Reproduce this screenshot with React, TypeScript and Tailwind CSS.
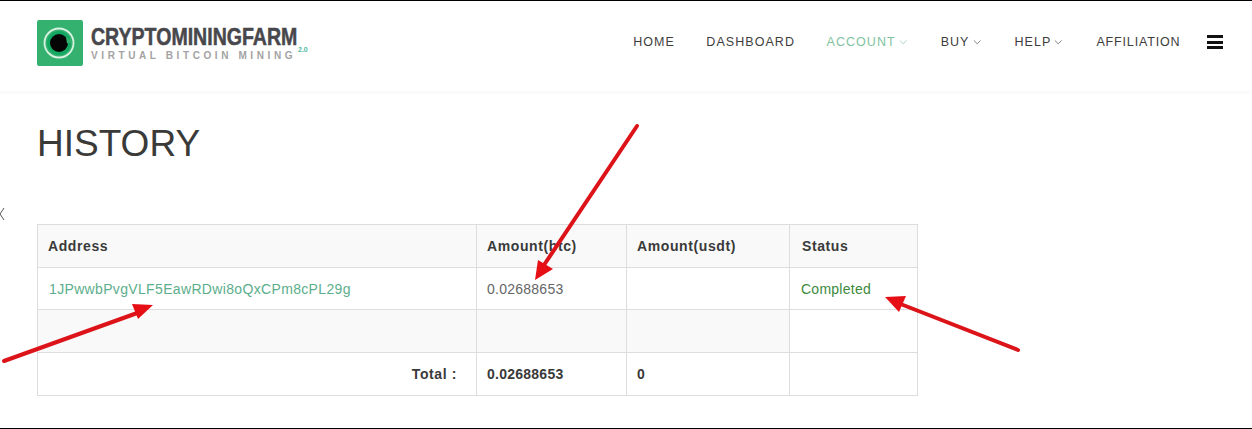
import { ChevronDown } from "lucide-react";

const font = "font-['Liberation_Sans',Arial,sans-serif]";

const Logo = () => (
  <div className="flex items-center">
    <div className="flex h-[46px] w-[46px] items-center justify-center rounded-[2px] bg-[#35b16f]">
      <svg width="34" height="34" viewBox="0 0 34 34">
        <circle cx="16" cy="17" r="14.5" fill="none" stroke="#d8f2e2" strokeWidth="1.8" />
        <circle cx="16" cy="17" r="12" fill="#12a862" />
        <circle cx="16" cy="17" r="9" fill="#050505" />
        <path d="M23 11 L30 16 L24 17.5 Z" fill="#35b16f" />
      </svg>
    </div>
    <div className="relative ml-[8px] h-[46px] w-[216px]">
      <div className="origin-left scale-x-[0.85] whitespace-nowrap pt-[6px] text-[23px] leading-[23px] font-bold text-[#47474c] [-webkit-text-stroke:0.5px_#47474c]">
        CRYPTOMININGFARM
      </div>
      <div className="mt-[2px] whitespace-nowrap text-[10px] leading-[10px] font-bold tracking-[3.6px] text-[#a3a3a3]">
        VIRTUAL BITCOIN MINING
      </div>
      <span className="absolute top-[26px] left-[207px] text-[7px] leading-[7px] font-bold text-[#4fb9a0]">2.0</span>
    </div>
  </div>
);

const NavItem = ({ label, active, caret, tight }: { label: string; active?: boolean; caret?: boolean; tight?: boolean }) => (
  <a className={`flex items-center gap-[1px] text-[12.5px] ${tight ? "tracking-[0.85px]" : "tracking-[1.05px]"} ${active ? "text-[#7fc4a1]" : "text-[#3d3d3d]"}`}>
    {label}
    {caret && <ChevronDown className="h-[12.5px] w-[12.5px] opacity-70" strokeWidth={1.75} />}
  </a>
);

const Arrows = () => (
  <svg className="pointer-events-none absolute inset-0" width="1252" height="429" viewBox="0 0 1252 429">
    <g stroke="#dc1419" strokeWidth="4" strokeLinecap="round" fill="none">
      <line x1="637" y1="125" x2="544" y2="264" />
      <line x1="4" y1="360" x2="140" y2="311" />
      <line x1="1018" y1="349" x2="898" y2="302" />
    </g>
    <g fill="#e60f16">
      <polygon points="535,279 538,259 553,268" />
      <polygon points="153,304 132,303 138,318" />
      <polygon points="885,296 906,295 899,311" />
    </g>
    <path d="M4 207 L0 213 L4 219 M0 213 L-3 210" fill="none" stroke="#555" strokeWidth="1" />
  </svg>
);

const thClass = "border border-[#dddddd] px-[10px] text-left text-[14px] font-bold tracking-[0.6px] text-[#3a3a3a]";
const tdClass = "border border-[#dddddd] px-[10px] pt-[2px] text-[14px] tracking-[0.25px]";

export default function App() {
  return (
    <div className={`${font} relative h-[429px] w-[1252px] overflow-hidden border-t border-b border-black bg-white`}>
      <header className="flex h-[90px] items-center justify-between pr-[29px] pb-[7px] pl-[37px] shadow-[0_2px_3px_rgba(0,0,0,0.03)]">
        <Logo />
        <nav className="flex items-center gap-[31.5px]">
          <NavItem label="HOME" />
          <NavItem label="DASHBOARD" />
          <NavItem label="ACCOUNT" active caret />
          <NavItem label="BUY" caret />
          <NavItem label="HELP" caret />
          <NavItem label="AFFILIATION" tight />
          <div className="mb-[1px] ml-[-5px] flex w-[16px] flex-col gap-[2.5px]">
            <span className="h-[3px] bg-[#111]" />
            <span className="h-[3px] bg-[#111]" />
            <span className="h-[3px] bg-[#111]" />
          </div>
        </nav>
      </header>

      <main className="px-[37px]">
        <h1 className="mt-[31px] text-[37px] leading-[44px] text-[#3a3a38]">HISTORY</h1>
        <table className="mt-[58px] w-[880px] table-fixed border-collapse">
          <colgroup>
            <col className="w-[439px]" />
            <col className="w-[150px]" />
            <col className="w-[163px]" />
            <col className="w-[128px]" />
          </colgroup>
          <tbody>
            <tr className="h-[43px] bg-[#f9f9f9]">
              <th className={thClass}>Address</th>
              <th className={thClass}>Amount(btc)</th>
              <th className={thClass}>Amount(usdt)</th>
              <th className={`${thClass} pl-[12px]`}>Status</th>
            </tr>
            <tr className="h-[42px]">
              <td className={`${tdClass} pl-[11px] tracking-[0.34px] text-[#5cae8c]`}>1JPwwbPvgVLF5EawRDwi8oQxCPm8cPL29g</td>
              <td className={`${tdClass} text-[#666666]`}>0.02688653</td>
              <td className={tdClass} />
              <td className={`${tdClass} pl-[11px] text-[#3c8a3c]`}>Completed</td>
            </tr>
            <tr className="h-[43px]">
              <td className={`${tdClass} bg-[#f9f9f9]`} />
              <td className={`${tdClass} bg-[#f9f9f9]`} />
              <td className={`${tdClass} bg-[#f9f9f9]`} />
              <td className={tdClass} />
            </tr>
            <tr className="h-[43px]">
              <td className={`${thClass} pr-[19px] text-right`}>Total :</td>
              <td className={`${thClass} tracking-[0.25px]`}>0.02688653</td>
              <td className={thClass}>0</td>
              <td className={thClass} />
            </tr>
          </tbody>
        </table>
      </main>

      <Arrows />
    </div>
  );
}
